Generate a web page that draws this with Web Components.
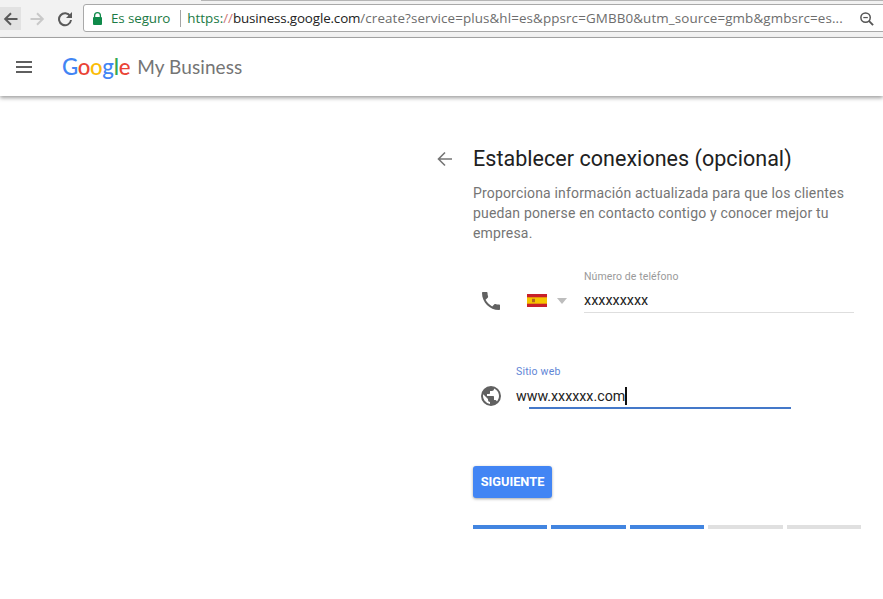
<!DOCTYPE html>
<html><head><meta charset="utf-8"><style>
html,body{margin:0;padding:0;background:#fff;height:599px;overflow:hidden;font-family:Roboto,sans-serif}
</style></head><body>
<browser-bar></browser-bar>
<gmb-header></gmb-header>
<setup-step></setup-step>
<script>
function def(name,html){customElements.define(name,class extends HTMLElement{constructor(){super();this.attachShadow({mode:'open'}).innerHTML=html}})}
def('browser-bar',`<style>
:host{display:flex;align-items:center;box-sizing:border-box;height:38px;background:#f2f2f2;border-bottom:1px solid #a9a9a9;position:relative}
.b{width:21px;height:23px;display:flex;align-items:center;justify-content:center;flex:none}
.b.back{background:#e2e2e2;margin-right:5px}
.b.fwd{margin-right:7px}
.b.rel{margin-right:8px}
.addr{flex:1;min-width:0;box-sizing:border-box;height:28px;background:#fff;border:1px solid #a9a9a9;border-radius:3px;display:flex;align-items:center;padding-left:8px;font:13.400px "Open Sans",sans-serif;white-space:nowrap;margin:-1px -3px 0 0}
.addr svg{flex:none}
.sec{color:#1b7a45;margin-left:8px;letter-spacing:-.1px}
.sep{width:1px;height:17px;background:#a5a5a5;margin:0 6px 0 10px;flex:none}
.u{color:#6d6d6d;flex:1;min-width:0;overflow:hidden;letter-spacing:.11px}.u i{font-style:normal;color:#1b7a45;letter-spacing:0}.u b{font-weight:400;color:#222;letter-spacing:-.15px}.u s{text-decoration:none;color:#c77;letter-spacing:0}
svg{display:block}
.addr .z{margin:0 11px 0 0}
.tick{position:absolute;top:0;left:201px;right:0;height:1px;background:#b5b5b5}
</style>
<div class="tick"></div>
<div class="b back"><svg width="16" height="16" viewBox="0 0 16 16"><path d="M14.500 8H2.500M8 2.200 2.200 8 8 13.800" fill="none" stroke="#5a5a5a" stroke-width="2"/></svg></div>
<div class="b fwd"><svg width="16" height="16" viewBox="0 0 16 16"><path d="M1.500 8h12M8 2.200 13.800 8 8 13.800" fill="none" stroke="#c9c9c9" stroke-width="2"/></svg></div>
<div class="b rel"><svg width="16" height="16" viewBox="0 0 16 16"><path d="M13.200 5.200A6 6 0 1 0 14 9" fill="none" stroke="#5a5a5a" stroke-width="2"/><path d="M15 1v6H9z" fill="#5a5a5a"/></svg></div>
<div class="addr">
<svg width="11" height="13" viewBox="0 0 11 13"><path d="M2.600 6V3.600a2.900 2.900 0 0 1 5.800 0V6" fill="none" stroke="#0f8a4a" stroke-width="1.300"/><rect x="1" y="5" width="9" height="8" rx="1" fill="#0f8a4a"/></svg>
<span class="sec">Es seguro</span><span class="sep"></span>
<span class="u"><i>https</i><i>:</i><s>//</s><b>business.google.com</b>/create?service=plus&amp;hl=es&amp;ppsrc=GMBB0&amp;utm_source=gmb&amp;gmbsrc=es...</span>
<svg class="z" width="15" height="15" viewBox="0 0 16 16"><circle cx="7" cy="7" r="5" fill="none" stroke="#555" stroke-width="1.600"/><path d="M10.500 10.500 15 15" stroke="#555" stroke-width="2"/><path d="M4.600 7h4.800" stroke="#555" stroke-width="1.300"/></svg>
</div>`);
def('gmb-header',`<style>
:host{display:flex;align-items:center;box-sizing:border-box;height:58px;background:#fff;box-shadow:0 2px 4px rgba(0,0,0,.38);position:relative;padding-left:16px}
svg{display:block;margin-right:30px}
.g{font:500 22.200px Lato,sans-serif;letter-spacing:-.3px;margin-right:7px;line-height:1;margin-top:1px}
.m{font:400 19px Lato,sans-serif;color:#757575;letter-spacing:.1px;margin-top:-2px}
</style>
<svg width="16" height="12" viewBox="0 0 16 12"><path d="M0 1h16M0 6h16M0 11h16" stroke="#5f5f5f" stroke-width="2"/></svg>
<span class="g"><span style="color:#4285f4">G</span><span style="color:#ea4335">o</span><span style="color:#fbbc05">o</span><span style="color:#4285f4">g</span><span style="color:#34a853">l</span><span style="color:#ea4335">e</span></span>
<span class="m">My Business</span>`);
def('phone-row',`<style>
:host{display:flex;align-items:flex-start}
.ic{width:24px;margin:18px 21px 0 -2px;flex:none}
svg{display:block}
.flag{width:20px;height:13px;margin:23px 10px 0 3px;flex:none}
.caret{margin:27px 17px 0 0;width:0;height:0;border:5.500px solid transparent;border-top:6px solid #bdbdbd;border-bottom:0;flex:none}
.f{width:270px}
.l{font:10.500px Roboto,sans-serif;color:#9a9a9a;height:15px;line-height:12px;letter-spacing:.1px}
.v{font:14.400px Roboto,sans-serif;color:#222;height:23px;line-height:24px;border-bottom:1px solid #dedede;box-sizing:content-box;padding-top:3px}
</style>
<div class="ic"><svg width="24" height="24" viewBox="0 0 24 24"><path fill="#616161" d="M6.600 10.800c1.400 2.800 3.800 5.100 6.600 6.600l2.200-2.200c.3-.3.7-.4 1-.2 1.100.4 2.300.6 3.600.6.600 0 1 .4 1 1V20c0 .6-.4 1-1 1C10.600 21 3 13.400 3 4c0-.6.4-1 1-1h3.500c.6 0 1 .4 1 1 0 1.300.2 2.500.6 3.600.1.300 0 .7-.2 1z"/></svg></div>
<div class="flag"><svg width="20" height="13" viewBox="0 0 20 13"><rect width="20" height="13" fill="#c8202a"/><rect y="3.300" width="20" height="6.400" fill="#f5c400"/><rect x="5" y="4.800" width="3" height="3.400" fill="#b5651d"/></svg></div>
<div class="caret"></div>
<div class="f"><div class="l">Número de teléfono</div><div class="v">xxxxxxxxx</div></div>`);
def('web-row',`<style>
:host{display:flex;align-items:flex-start}
.ic{width:24px;margin:18px 13px 0 -2px;flex:none}
svg{display:block}
.f{width:275px;position:relative}
.l{font:10.500px Roboto,sans-serif;color:#5f86d6;height:16px;line-height:12px;letter-spacing:.2px}
.v{font:14.250px Roboto,sans-serif;color:#222;height:22px;line-height:23px;padding-top:3px;display:flex;align-items:center}
.cur{width:1.500px;height:18px;background:#111}
.line{height:2px;background:#4478c9;margin-left:13px}
</style>
<div class="ic"><svg width="24" height="24" viewBox="0 0 24 24"><path fill="#616161" d="M12 2a10 10 0 1 0 0 20 10 10 0 0 0 0-20zm-1 17.900A8 8 0 0 1 4.200 10.200L9 15v1c0 1.100.9 2 2 2zm6.900-2.500c-.3-.8-1-1.400-1.900-1.400h-1v-3c0-.6-.4-1-1-1H8v-2h2c.6 0 1-.4 1-1V7h2c1.100 0 2-.9 2-2v-.4a8 8 0 0 1 2.900 12.800z"/></svg></div>
<div class="f"><div class="l">Sitio web</div><div class="v"><span>www.xxxxxx.com</span><span class="cur"></span></div><div class="line"></div></div>`);
def('step-progress',`<style>
:host{display:flex;gap:4px;width:388px}
div{flex:1;height:4px;background:#4285e0}
.off{background:#e0e0e0}
</style><div></div><div></div><div></div><div class="off"></div><div class="off"></div>`);
def('setup-step',`<style>
:host{display:flex;padding:50px 0 0 437px}
.a{width:36px;flex:none;padding-top:5px}
svg{display:block}
h1{margin:0;font:400 21.500px/26px Roboto,sans-serif;color:#212121;letter-spacing:.04px}
p{margin:11px 0 0;font:400 14px/20px Roboto,sans-serif;color:#757575;width:380px;letter-spacing:.17px}
phone-row{margin:28px 0 0 8px}
web-row{margin:53px 0 0 8px}
button{display:block;margin:57px 0 0;width:79px;height:32px;border:0;border-radius:3px;background:#4285f4;color:#fff;font:700 12.800px Roboto,sans-serif;padding:0 0 1px;box-shadow:0 1px 3px rgba(0,0,0,.35)}
step-progress{margin-top:27px}
</style>
<div class="a"><svg width="15" height="16" viewBox="0 0 15 16"><path d="M15 8H1.500M8 1.500 1.500 8 8 14.500" fill="none" stroke="#757575" stroke-width="1.600"/></svg></div>
<div><h1>Establecer conexiones (opcional)</h1>
<p>Proporciona información actualizada para que los clientes puedan ponerse en contacto contigo y conocer mejor tu empresa.</p>
<phone-row></phone-row><web-row></web-row>
<button>SIGUIENTE</button><step-progress></step-progress></div>`);
</script>
</body></html>
